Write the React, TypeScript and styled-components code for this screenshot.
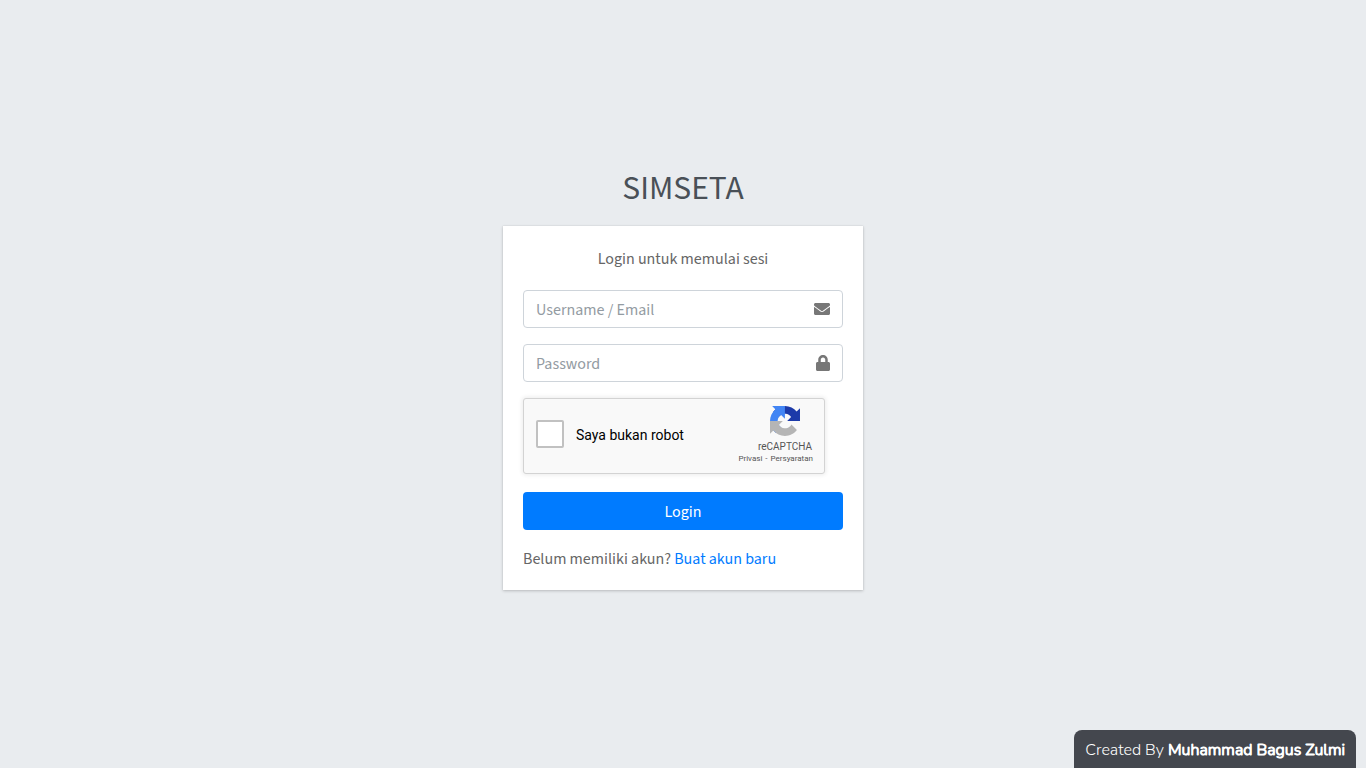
import React from "react";
import styled, { createGlobalStyle } from "styled-components";
import { FaEnvelope, FaLock } from "react-icons/fa";

const GlobalStyle = createGlobalStyle`
  *, *::before, *::after { box-sizing: border-box; }
  body {
    margin: 0;
    background: #e9ecef;
    color: #212529;
    font-family: "Source Sans 3", "Noto Sans CJK JP", sans-serif;
    font-size: 16px;
    line-height: 26px;
  }
`;

const Page = styled.main`
  min-height: 100vh;
  display: flex;
  flex-direction: column;
  align-items: center;
  justify-content: center;
  padding-bottom: 16px;
`;

const LoginBox = styled.div`
  width: 360px;
  max-width: 90vw;
`;

const Brand = styled.h1`
  margin: 0 0 16px;
  color: #495057;
  font-family: "Noto Sans CJK JP", sans-serif;
  font-size: 30px;
  font-weight: 400;
  line-height: 48px;
  text-align: center;
`;

const Card = styled.form`
  display: flex;
  flex-direction: column;
  gap: 16px;
  padding: 20px 20px 18px;
  background: #fff;
  color: #666;
  box-shadow: 0 0 1px rgba(0, 0, 0, 0.125), 0 1px 3px rgba(0, 0, 0, 0.2);
`;

const Message = styled.p`
  margin: 0 0 2px;
  text-align: center;
`;

const Field = styled.label`
  display: flex;
  align-items: center;
  height: 38px;
  padding: 0 12px;
  border: 1px solid #ced4da;
  border-radius: 4px;
  color: #777;
`;

const FieldIcon = styled.span<{ $width: number }>`
  display: flex;
  justify-content: center;
  flex: none;
  width: ${(props) => props.$width}px;

  svg {
    flex: none;
  }
`;

const FieldInput = styled.input`
  flex: 1;
  min-width: 0;
  height: 28px;
  padding: 2px 0 0;
  border: 0;
  outline: 0;
  background: transparent;
  color: #495057;
  font: inherit;

  &::placeholder {
    color: #939ba2;
    opacity: 1;
  }
`;

const Captcha = styled.div`
  display: flex;
  align-items: flex-start;
  justify-content: space-between;
  width: 302px;
  max-width: 100%;
  height: 76px;
  margin-bottom: 2px;
  padding: 0 11px 0 12px;
  border: 1px solid #d3d3d3;
  border-radius: 3px;
  background: #f9f9f9;
  box-shadow: 0 0 4px 1px rgba(0, 0, 0, 0.08);
  font-family: Roboto, sans-serif;
`;

const CaptchaCheck = styled.label`
  display: flex;
  align-items: center;
  gap: 12px;
  padding-top: 21px;
  color: #000;
  font-size: 14px;
  line-height: 30px;
`;

const Checkbox = styled.input`
  appearance: none;
  align-self: flex-start;
  width: 28px;
  height: 28px;
  margin: 0;
  border: 2px solid #c1c1c1;
  border-radius: 2px;
  background: #fff;

  &:checked {
    background: #4285f4;
  }
`;

const CaptchaBrand = styled.div`
  display: flex;
  flex-direction: column;
  align-items: flex-end;
  padding-top: 7px;
  color: #555;
`;

const CaptchaLogo = styled.svg`
  width: 30px;
  height: 30px;
  margin-right: 13px;
`;

const CaptchaName = styled.span`
  padding: 5px 1px 0 0;
  font-size: 10px;
  line-height: 12px;
`;

const CaptchaLinks = styled.div`
  display: flex;
  gap: 3px;
  font-size: 8px;
  line-height: 12px;

  a {
    color: inherit;
    text-decoration: none;
  }
`;

const SubmitButton = styled.button`
  height: 38px;
  padding: 2px 12px 0;
  border: 0;
  border-radius: 4px;
  background: #007bff;
  color: #fff;
  font: inherit;
  cursor: pointer;
`;

const Register = styled.p`
  margin: 0;

  a {
    color: #007bff;
    text-decoration: none;
  }
`;

const Credit = styled.footer`
  position: fixed;
  right: 10px;
  bottom: 0;
  padding: 7px 11px 5px;
  border-radius: 8px 8px 0 0;
  background: #44474e;
  color: #fff;
  font-family: Nunito, Lato, sans-serif;
  font-size: 16px;
  font-weight: 300;
  white-space: nowrap;

  strong {
    font-weight: 300;
    -webkit-text-stroke: 1px #fff;
  }
`;

export default function App() {
  return (
    <>
      <GlobalStyle />
      <Page>
        <LoginBox>
          <Brand>SIMSETA</Brand>
          <Card onSubmit={(event) => event.preventDefault()}>
            <Message>Login untuk memulai sesi</Message>
            <Field>
              <FieldInput type="text" name="username" placeholder="Username / Email" aria-label="Username / Email" />
              <FieldIcon $width={16}>
                <FaEnvelope />
              </FieldIcon>
            </Field>
            <Field>
              <FieldInput type="password" name="password" placeholder="Password" aria-label="Password" />
              <FieldIcon $width={14}>
                <FaLock />
              </FieldIcon>
            </Field>
            <Captcha>
              <CaptchaCheck>
                <Checkbox type="checkbox" name="robot" />
                Saya bukan robot
              </CaptchaCheck>
              <CaptchaBrand>
                <CaptchaLogo viewBox="0 0 64 64" aria-hidden="true">
                  <path
                    fill="#1c3aa9"
                    d="M64 31.955l-.033-1.37V4.687l-7.16 7.16C50.948 4.674 42.033.093 32.05.093c-10.4 0-19.622 4.96-25.458 12.64l11.736 11.86a15.55 15.55 0 0 1 4.754-5.334c2.05-1.6 4.952-2.906 8.968-2.906.485 0 .86.057 1.135.163 4.976.393 9.288 3.14 11.828 7.124l-8.307 8.307L64 31.953"
                  />
                  <path
                    fill="#4285f4"
                    d="M31.862.094l-1.37.033H4.594l7.16 7.16C4.58 13.147 0 22.06 0 32.046c0 10.4 4.96 19.622 12.64 25.458L24.5 45.768a15.55 15.55 0 0 1-5.334-4.754c-1.6-2.05-2.906-4.952-2.906-8.968 0-.485.057-.86.163-1.135.393-4.976 3.14-9.288 7.124-11.828l8.307 8.307L31.86.095"
                  />
                  <path
                    fill="#b5b5b5"
                    d="M.001 32.045l.033 1.37v25.898l7.16-7.16c5.86 7.173 14.774 11.754 24.76 11.754 10.4 0 19.622-4.96 25.458-12.64l-11.736-11.86a15.55 15.55 0 0 1-4.754 5.334c-2.05 1.6-4.952 2.906-8.968 2.906-.485 0-.86-.057-1.135-.163-4.976-.393-9.288-3.14-11.828-7.124l8.307-8.307c-10.522.04-22.4.066-27.295-.005"
                  />
                </CaptchaLogo>
                <CaptchaName>reCAPTCHA</CaptchaName>
                <CaptchaLinks>
                  <a href="#privasi">Privasi</a>
                  <span>-</span>
                  <a href="#persyaratan">Persyaratan</a>
                </CaptchaLinks>
              </CaptchaBrand>
            </Captcha>
            <SubmitButton type="submit">Login</SubmitButton>
            <Register>
              Belum memiliki akun? <a href="#register">Buat akun baru</a>
            </Register>
          </Card>
        </LoginBox>
      </Page>
      <Credit>
        Created By <strong>Muhammad Bagus Zulmi</strong>
      </Credit>
    </>
  );
}
